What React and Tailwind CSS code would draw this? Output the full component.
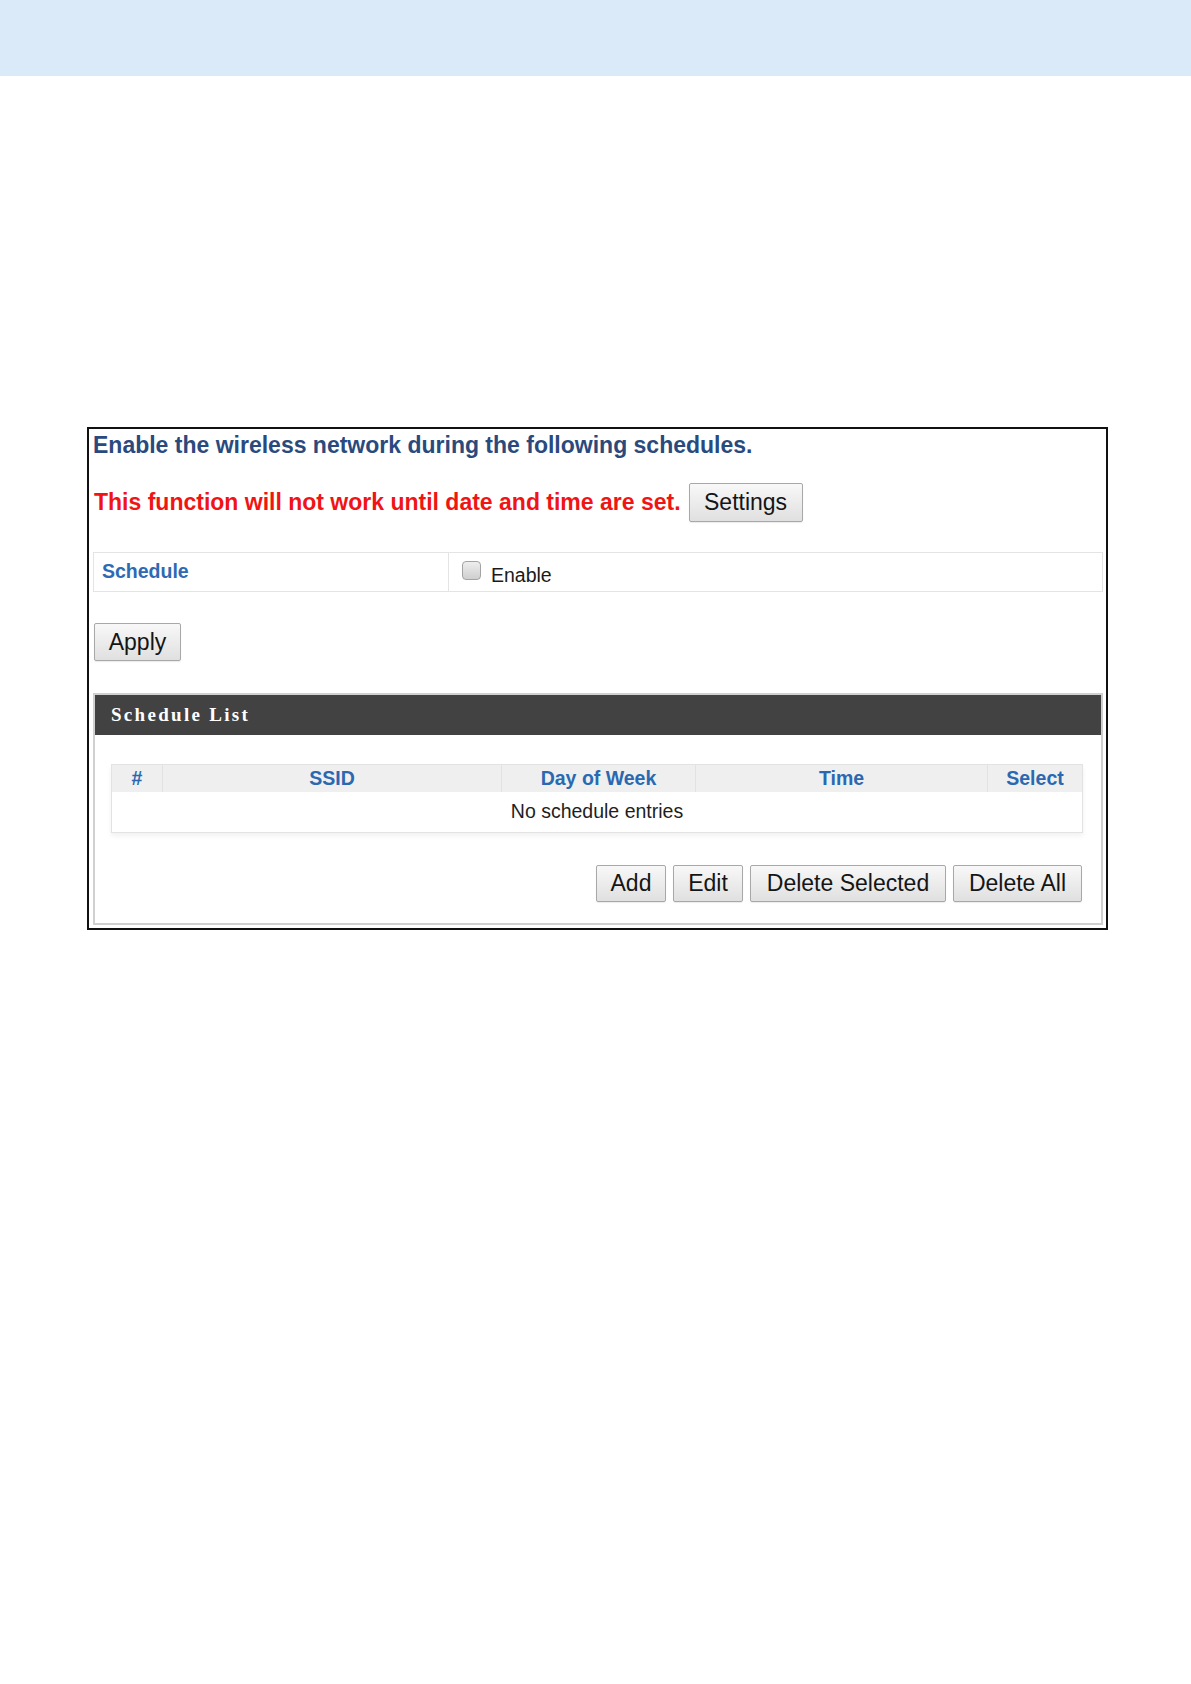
import React from "react";

const btn =
  "box-border flex items-center justify-center whitespace-nowrap px-0 text-[23px] leading-none text-[#151515] border border-[#a8a8a8] rounded-[2px] bg-gradient-to-b from-[#f8f8f8] to-[#e0e0e0] shadow-[0_1px_1px_rgba(0,0,0,0.08)]";

export default function App() {
  return (
    <div className="min-h-[1684px] w-[1191px] bg-white font-['Liberation_Sans',Arial,sans-serif]">
      <div className="h-[76px] w-full bg-[#dbeaf9]" />
      <div className="pt-[351px] pl-[87px]">
        <div className="box-border w-[1021px] border-2 border-[#111] pl-[4px] pr-[3px] pt-[3px] pb-[3px]">
          <div className="text-[23px] font-bold leading-[26px] text-[#2a4a7e] whitespace-nowrap">
            Enable the wireless network during the following schedules.
          </div>
          <div className="mt-[25px] flex h-[39px] items-center">
            <span className="ml-[1px] text-[23px] font-bold leading-none text-[#f01414] whitespace-nowrap">
              This function will not work until date and time are set.
            </span>
            <button className={btn + " ml-[8px] h-[39px] w-[114px]"}>Settings</button>
          </div>
          <div className="mt-[30px] box-border flex h-[40px] border border-[#e4e4e4]">
            <div className="flex w-[355px] items-center border-r border-[#e4e4e4] pl-[8px] text-[19.5px] font-bold text-[#2d6ab3]">
              Schedule
            </div>
            <div className="flex items-start pl-[13px]">
              <div className="mt-[8px] h-[19px] w-[19px] rounded-[4px] border border-[#a3a3a3] bg-gradient-to-b from-[#eeeeee] to-[#cfcfcf]" />
              <span className="ml-[10px] mt-[13px] text-[19.5px] leading-none text-[#1a1a1a]">Enable</span>
            </div>
          </div>
          <div className="mt-[31px] flex">
            <button className={btn + " ml-[1px] h-[38px] w-[87px]"}>Apply</button>
          </div>
          <div className="mt-[32px] box-border border-2 border-[#d0d0d0]">
            <div className="flex h-[40px] items-center bg-[#424242] pl-[16px] font-['Liberation_Serif','Times_New_Roman',serif] text-[19px] font-bold tracking-[2.3px] text-white">
              Schedule List
            </div>
            <div className="pl-[16px] pr-[18px] pt-[29px] pb-[21px]">
              <div className="box-border border border-[#e3e3e3] shadow-[0_3px_5px_rgba(0,0,0,0.06)]">
                <div className="grid h-[27px] grid-cols-[50px_339px_194px_292px_95px] bg-[#efefef] text-[19.5px] font-bold leading-none text-[#2a68b1]">
                  <div className="flex items-center justify-center">#</div>
                  <div className="flex items-center justify-center border-l border-[#e2e2e2]">SSID</div>
                  <div className="flex items-center justify-center border-l border-[#e2e2e2]">Day of Week</div>
                  <div className="flex items-center justify-center border-l border-[#e2e2e2]">Time</div>
                  <div className="flex items-center justify-center border-l border-[#e2e2e2]">Select</div>
                </div>
                <div className="flex h-[40px] items-center justify-center text-[19.5px] leading-none text-[#1e1e1e]">
                  No schedule entries
                </div>
              </div>
              <div className="mt-[32px] flex justify-end gap-[7px] pr-[1px]">
                <button className={btn + " h-[37px] w-[70px]"}>Add</button>
                <button className={btn + " h-[37px] w-[70px]"}>Edit</button>
                <button className={btn + " h-[37px] w-[196px]"}>Delete Selected</button>
                <button className={btn + " h-[37px] w-[129px]"}>Delete All</button>
              </div>
            </div>
          </div>
        </div>
      </div>
    </div>
  );
}
